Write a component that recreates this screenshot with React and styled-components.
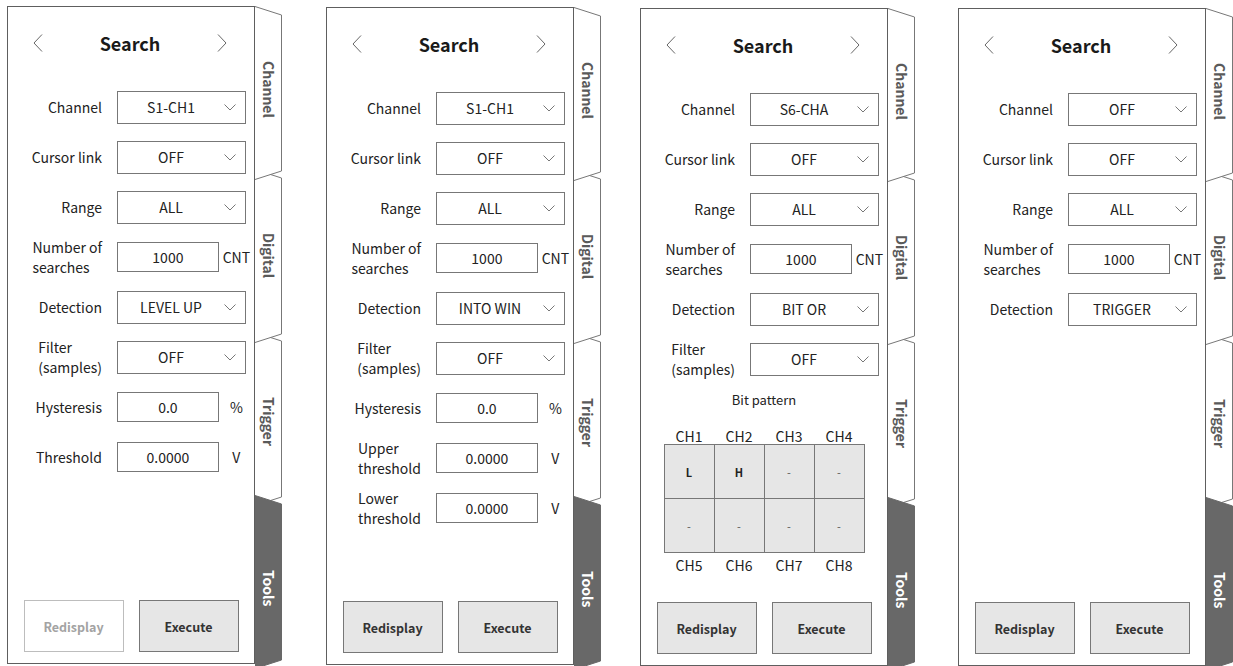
import React from "react";
import styled, { createGlobalStyle } from "styled-components";

const GlobalStyle = createGlobalStyle`
  html, body {
    margin: 0;
    padding: 0;
    background: #fff;
  }
  body {
    font-family: "Noto Sans CJK JP", "Noto Sans", sans-serif;
    color: #222;
    overflow: hidden;
  }
`;

const Page = styled.div`
  display: flex;
  align-items: flex-start;
  padding-left: 7px;
  width: 1233px;
  height: 666px;
  box-sizing: border-box;
  overflow: hidden;
`;

const Screen = styled.div`
  display: flex;
  flex: none;
  margin-left: ${(p) => p.$ml}px;
  margin-top: ${(p) => p.$mt}px;
`;

const Panel = styled.div`
  width: 248px;
  height: 658px;
  box-sizing: border-box;
  border: 1px solid #5e5e5e;
  display: flex;
  flex-direction: column;
  padding-bottom: 11px;
  background: #fff;
`;

const Header = styled.div`
  height: 71px;
  margin-bottom: 4px;
  display: flex;
  align-items: center;
  justify-content: space-between;
  padding: 0 27px 0 25px;
`;

const Title = styled.div`
  font-size: 18px;
  font-weight: 700;
  color: #1a1a1a;
`;

const Row = styled.div`
  height: 50px;
  flex: none;
  display: flex;
  align-items: center;
`;

const Label = styled.div`
  width: 94px;
  flex: none;
  margin-right: 15px;
  display: flex;
  justify-content: flex-end;
  font-size: 14px;
  line-height: 20px;
  color: #222;

  span {
    text-align: left;
    white-space: pre-line;
  }
`;

const Select = styled.div`
  width: 129px;
  height: 33px;
  box-sizing: border-box;
  border: 1px solid #777;
  display: flex;
  align-items: center;
  font-size: 14px;
  color: #222;

  span {
    flex: 1;
    text-align: center;
  }
  svg {
    margin-right: 9px;
  }
`;

const Input = styled.div`
  width: 104px;
  height: 30px;
  box-sizing: border-box;
  border: 1px solid #777;
  display: flex;
  align-items: center;
  justify-content: center;
  font-size: 14px;
  color: #222;
`;

const Unit = styled.div`
  width: 36px;
  text-align: center;
  font-size: 14px;
  color: #222;
`;

const BitTitle = styled.div`
  margin-top: 8px;
  text-align: center;
  font-size: 13px;
  line-height: 16px;
  color: #222;
`;

const ChRow = styled.div`
  align-self: center;
  display: grid;
  grid-template-columns: repeat(4, 49px);
  column-gap: 1px;
  padding: 0 1px;
  margin-top: ${(p) => p.$mt}px;
  font-size: 14px;
  line-height: 16px;
  text-align: center;
  color: #222;
`;

const BitGrid = styled.div`
  align-self: center;
  display: grid;
  grid-template-columns: repeat(4, 49px);
  grid-template-rows: repeat(2, 53px);
  gap: 1px;
  padding: 1px;
  background: #777;
`;

const Cell = styled.div`
  background: #e6e6e6;
  display: flex;
  align-items: center;
  justify-content: center;
  font-size: 11px;
  font-weight: ${(p) => (p.$bold ? 700 : 400)};
  color: ${(p) => (p.$bold ? "#222" : "#555")};
`;

const Actions = styled.div`
  margin-top: auto;
  display: flex;
  justify-content: center;
  gap: 15px;
`;

const Button = styled.button`
  width: 100px;
  height: 52px;
  box-sizing: border-box;
  padding: 0;
  font-family: inherit;
  font-size: 12.5px;
  font-weight: 700;
  background: ${(p) => (p.$off ? "#fff" : "#e6e6e6")};
  border: 1px solid ${(p) => (p.$off ? "#bdbdbd" : "#777")};
  color: ${(p) => (p.$off ? "#a3a3a3" : "#333")};
`;

const TabStrip = styled.div`
  width: 27px;
  flex: none;
  display: flex;
  flex-direction: column;
`;

const Tab = styled.div`
  position: relative;
  height: 174px;
  flex: none;
  margin-top: ${(p) => (p.$first ? 0 : -11)}px;
  z-index: ${(p) => p.$z};
  display: flex;
  align-items: center;
  justify-content: center;
  box-sizing: border-box;
  padding: ${(p) =>
    p.$shift > 0 ? `${p.$shift * 2}px 0 0` : `0 0 ${-p.$shift * 2}px`};
`;

const TabShape = styled.svg`
  position: absolute;
  left: 0;
  top: 0;
  width: 27px;
  height: 174px;
  overflow: visible;
`;

const TabLabel = styled.span`
  position: relative;
  writing-mode: vertical-rl;
  font-size: 14px;
  font-weight: 700;
  line-height: 1;
  color: ${(p) => (p.$active ? "#fff" : "#5a5a5a")};
`;

const Chevron = ({ dir }) => (
  <svg width="10" height="18" viewBox="0 0 10 18">
    <path
      d={dir === "left" ? "M9 0.5 L1 9 L9 17.5" : "M1 0.5 L9 9 L1 17.5"}
      fill="none"
      stroke="#666"
      strokeWidth="1"
    />
  </svg>
);

const DropArrow = () => (
  <svg width="12" height="7" viewBox="0 0 12 7">
    <path d="M0.5 0.5 L6 6 L11.5 0.5" fill="none" stroke="#777" strokeWidth="1" />
  </svg>
);

const tabs = [
  { name: "Channel", z: 4, shift: -4 },
  { name: "Digital", z: 3, shift: 0 },
  { name: "Trigger", z: 1, shift: 3 },
  { name: "Tools", z: 2, shift: 6, active: true },
];

function Tabs() {
  return (
    <TabStrip>
      {tabs.map((t, i) => (
        <Tab key={t.name} $first={i === 0} $z={t.z} $shift={t.shift}>
          <TabShape viewBox="0 0 27 174">
            <path
              d="M0 0.5 L26.5 9 L26.5 165 L0 173.5"
              fill={t.active ? "#686868" : "#fff"}
              stroke={t.active ? "#686868" : "#777"}
              strokeWidth="1"
            />
          </TabShape>
          <TabLabel $active={t.active}>{t.name}</TabLabel>
        </Tab>
      ))}
    </TabStrip>
  );
}

function Field({ row }) {
  return (
    <Row>
      <Label>
        <span>{row.label}</span>
      </Label>
      {row.unit !== undefined ? (
        <>
          <Input>{row.value}</Input>
          <Unit>{row.unit}</Unit>
        </>
      ) : (
        <Select>
          <span>{row.value}</span>
          <DropArrow />
        </Select>
      )}
    </Row>
  );
}

function BitPattern() {
  const cells = ["L", "H", "-", "-", "-", "-", "-", "-"];
  return (
    <>
      <BitTitle>Bit pattern</BitTitle>
      <ChRow $mt={20}>
        {["CH1", "CH2", "CH3", "CH4"].map((c) => (
          <div key={c}>{c}</div>
        ))}
      </ChRow>
      <BitGrid>
        {cells.map((v, i) => (
          <Cell key={i} $bold={v !== "-"}>
            {v}
          </Cell>
        ))}
      </BitGrid>
      <ChRow $mt={4}>
        {["CH5", "CH6", "CH7", "CH8"].map((c) => (
          <div key={c}>{c}</div>
        ))}
      </ChRow>
    </>
  );
}

const common = (channel, detection) => [
  { label: "Channel", value: channel },
  { label: "Cursor link", value: "OFF" },
  { label: "Range", value: "ALL" },
  { label: "Number of\nsearches", value: "1000", unit: "CNT" },
  { label: "Detection", value: detection },
];

const filter = { label: "Filter\n(samples)", value: "OFF" };

const screens = [
  {
    ml: 0,
    mt: 6,
    off: true,
    rows: [
      ...common("S1-CH1", "LEVEL UP"),
      filter,
      { label: "Hysteresis", value: "0.0", unit: "%" },
      { label: "Threshold", value: "0.0000", unit: "V" },
    ],
  },
  {
    ml: 44,
    mt: 7,
    rows: [
      ...common("S1-CH1", "INTO WIN"),
      filter,
      { label: "Hysteresis", value: "0.0", unit: "%" },
      { label: "Upper\nthreshold", value: "0.0000", unit: "V" },
      { label: "Lower\nthreshold", value: "0.0000", unit: "V" },
    ],
  },
  {
    ml: 39,
    mt: 8,
    bits: true,
    rows: [...common("S6-CHA", "BIT OR"), filter],
  },
  {
    ml: 43,
    mt: 8,
    rows: common("OFF", "TRIGGER"),
  },
];

export default function App() {
  return (
    <>
      <GlobalStyle />
      <Page>
        {screens.map((s, i) => (
          <Screen key={i} $ml={s.ml} $mt={s.mt}>
            <Panel>
              <Header>
                <Chevron dir="left" />
                <Title>Search</Title>
                <Chevron dir="right" />
              </Header>
              {s.rows.map((r) => (
                <Field key={r.label} row={r} />
              ))}
              {s.bits && <BitPattern />}
              <Actions>
                <Button $off={s.off}>Redisplay</Button>
                <Button>Execute</Button>
              </Actions>
            </Panel>
            <Tabs />
          </Screen>
        ))}
      </Page>
    </>
  );
}
